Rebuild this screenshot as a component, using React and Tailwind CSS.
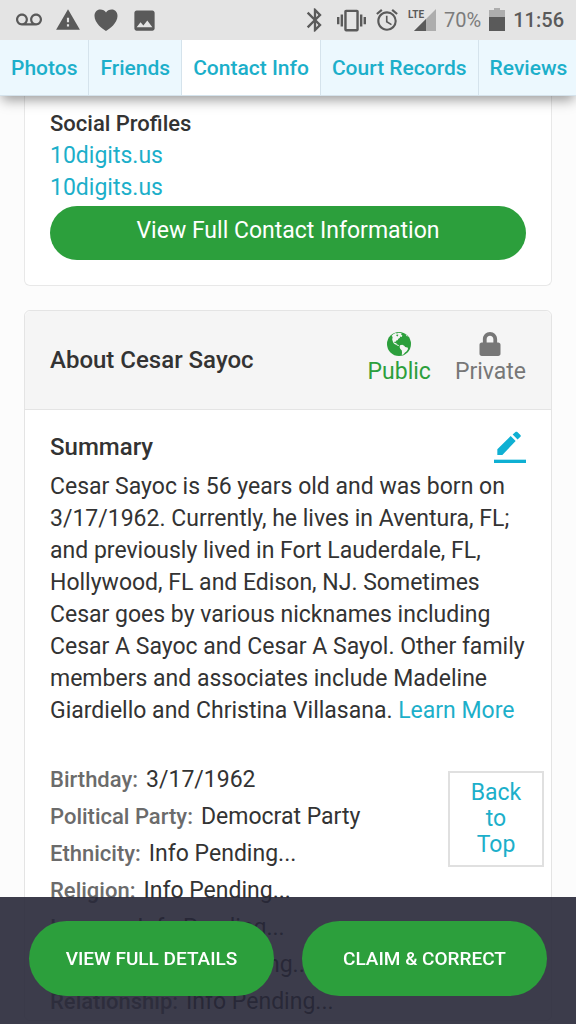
import { MdVoicemail, MdWarning, MdImage, MdBluetooth, MdVibration, MdAlarm } from 'react-icons/md';
import { FaLock } from 'react-icons/fa';

const tabs = [
  { name: 'Photos', href: '#photos' },
  { name: 'Friends', href: '#friends' },
  { name: 'Contact Info', href: '#contact', active: true },
  { name: 'Court Records', href: '#court' },
  { name: 'Reviews', href: '#reviews' },
];

const details = [
  { label: 'Birthday', value: '3/17/1962' },
  { label: 'Political Party', value: 'Democrat Party' },
  { label: 'Ethnicity', value: 'Info Pending...' },
  { label: 'Religion', value: 'Info Pending...' },
  { label: 'Income', value: 'Info Pending...' },
  { label: 'Net Worth', value: 'Info Pending...' },
  { label: 'Relationship', value: 'Info Pending...' },
];

function HeartIcon() {
  return (
    <svg viewBox="0 0 24 22" className="h-[22px] w-6" fill="currentColor" aria-hidden="true">
      <path d="M12 22C8.5 20 0.500 14 0.500 7C0.500 3 3 0.500 6.200 0.500C8.800 0.500 11 1.700 12 3.400C13 1.700 15.200 0.500 17.800 0.500C21 0.500 23.500 3 23.500 7C23.500 14 15.500 20 12 22Z" />
    </svg>
  );
}

function SignalIcon() {
  return (
    <svg viewBox="0 0 28 24" className="h-6 w-7" aria-hidden="true">
      <path d="M28 1V23H6Z" fill="#adadad" />
      <path d="M18 11V23H6Z" fill="#5a5a5a" />
      <text x="0" y="10" fontSize="10" fontWeight="700" fontFamily="Roboto, sans-serif" fill="#5a5a5a">LTE</text>
    </svg>
  );
}

function BatteryIcon() {
  return (
    <svg viewBox="0 0 16 24" className="h-6 w-4" aria-hidden="true">
      <path d="M5 0H11V2H16V10H0V2H5Z" fill="#adadad" />
      <path d="M0 9H16V23H0Z" fill="#5a5a5a" />
    </svg>
  );
}

function GlobeIcon() {
  return (
    <svg viewBox="0 0 24 24" className="size-6" aria-hidden="true">
      <circle cx="12" cy="12" r="12" fill="currentColor" />
      <g fill="#f5f5f5">
        <path d="M6.200 2.200L8.500 1L10 1.600L11.600 0.800L14.600 1.200L14.200 2.800L15.400 3.600L14.600 5L12.800 4.400L13 5.800L11.400 6.800L10.600 8.200L9.200 8.600L9 9.800L7.800 9.400L7.200 10.400L8 11.200L9.200 10.800L9.600 12.200L11 12.800L12.200 13.400L11.200 14L9 12.800L7 11.800L6 10L5.200 7.600L5.600 5L4.600 3.800Z" />
        <path d="M13 13.200L15.200 12.800L17.200 13.800L18.200 15L21 15.800L20.800 17.600L19.400 19.400L18 20.600L16.400 22.400L14.800 23L15 20.400L14.800 18.400L13.200 16.800L12.600 15Z" />
        <path d="M18.600 2.200L21 4.400L19.400 4Z" />
      </g>
      <path d="M9.800 2.400L11.400 2.800L10.600 4.400L9.200 3.800Z" fill="currentColor" />
    </svg>
  );
}

function EditIcon() {
  return (
    <svg viewBox="0 0 24 24" className="size-8" fill="currentColor" aria-hidden="true">
      <path d="M16.250 7.500L12.500 3.750L2.500 13.750V18H6.250ZM19.800 4.400C20.200 4 20.200 3.400 19.800 3L17.500 0.800C17.100 0.400 16.500 0.400 16.100 0.800L14 2.700L17.700 6.400Z" />
      <path d="M0 21.500H24V24H0Z" />
    </svg>
  );
}

function StatusBar() {
  return (
    <div className="flex h-10 items-center justify-between bg-[#e4e4e4] pl-4 pr-3 text-[#5a5a5a]">
      <div className="flex items-center gap-[13px]">
        <MdVoicemail className="size-[26px]" />
        <MdWarning className="size-[26px]" />
        <HeartIcon />
        <MdImage className="size-[27px]" />
      </div>
      <div className="flex items-center gap-2">
        <MdBluetooth className="size-7" />
        <MdVibration className="size-[29px]" />
        <MdAlarm className="size-[26px]" />
        <SignalIcon />
        <span className="text-[20px] text-[#7c7c7c]">70%</span>
        <BatteryIcon />
        <span className="text-[20px] font-medium">11:56</span>
      </div>
    </div>
  );
}

export default function App() {
  return (
    <div className="flex h-screen flex-col overflow-hidden bg-[#fcfcfc] font-[Roboto,sans-serif] text-[23px] leading-8 text-[#333]">
      <header className="relative z-10 shadow-[0_6px_12px_-2px_rgba(0,0,0,0.4)]">
        <StatusBar />
        <nav className="flex h-14 overflow-hidden bg-white">
          {tabs.map((tab) => (
            <a
              key={tab.name}
              href={tab.href}
              className={`flex shrink-0 items-center border-r border-b border-[#d5e3ec] px-[11px] text-[21px] font-medium whitespace-nowrap text-[#1cafca] last:grow last:border-r-0 ${tab.active ? 'bg-white' : 'bg-[#ecf8fe]'}`}
            >
              {tab.name}
            </a>
          ))}
        </nav>
      </header>

      <main className="min-h-0 flex-1 overflow-hidden px-6">
        <section className="rounded-b-md border border-t-0 border-[#e8e8e8] bg-white px-[25px] pt-3 pb-[25px]">
          <h2 className="text-[22px] font-medium">Social Profiles</h2>
          <ul className="text-[#1cafca]">
            <li><a href="#profile-1">10digits.us</a></li>
            <li><a href="#profile-2">10digits.us</a></li>
          </ul>
          <button type="button" className="mt-0.5 h-[54px] w-full rounded-full bg-[#2c9f3c] pb-1 text-white">
            View Full Contact Information
          </button>
        </section>

        <section className="mt-6 rounded-md border border-[#e4e4e4] bg-white">
          <div className="flex h-[99px] items-center justify-between rounded-t-md border-b border-[#e4e4e4] bg-[#f5f5f5] px-[25px]">
            <h2 className="text-[24px] font-medium">About Cesar Sayoc</h2>
            <div className="flex gap-6">
              <button type="button" className="flex flex-col items-center text-[#2c9f3c]">
                <GlobeIcon />
                Public
              </button>
              <button type="button" className="flex flex-col items-center text-[#777]">
                <FaLock className="size-6" />
                Private
              </button>
            </div>
          </div>

          <div className="px-[25px] pt-[21px]">
            <div className="flex items-center justify-between">
              <h3 className="text-[24px] font-medium">Summary</h3>
              <button type="button" aria-label="Edit summary" className="text-[#0fb0d3]">
                <EditIcon />
              </button>
            </div>
            <p className="mt-2">
              Cesar Sayoc is 56 years old and was born on 3/17/1962. Currently, he lives in Aventura, FL; and
              previously lived in Fort Lauderdale, FL, Hollywood, FL and Edison, NJ. Sometimes Cesar goes by various
              nicknames including Cesar A Sayoc and Cesar A Sayol. Other family members and associates include
              Madeline Giardiello and Christina Villasana. <a href="#more" className="text-[#1cafca]">Learn More</a>
            </p>

            <dl className="mt-[34px]">
              {details.map((item) => (
                <div key={item.label} className="flex h-[37px] items-center gap-2">
                  <dt className="text-[22px] font-medium text-[#6b6b6b]">{item.label}:</dt>
                  <dd>{item.value}</dd>
                </div>
              ))}
            </dl>
          </div>
        </section>
      </main>

      <a
        href="#top"
        className="fixed right-8 bottom-[157px] flex h-24 w-24 flex-col items-center border-2 border-[#e0e0e0] bg-white pt-[7px] leading-[26px] text-[#1cafca]"
      >
        <span>Back</span>
        <span>to</span>
        <span>Top</span>
      </a>

      <div className="fixed inset-x-0 bottom-0 z-20 flex gap-7 bg-[#272737]/90 px-[29px] pt-6 pb-7 text-[19px] font-medium text-white">
        <button type="button" className="h-[75px] flex-1 rounded-full bg-[#2c9f3c]">VIEW FULL DETAILS</button>
        <button type="button" className="h-[75px] flex-1 rounded-full bg-[#2c9f3c]">CLAIM &amp; CORRECT</button>
      </div>
    </div>
  );
}
